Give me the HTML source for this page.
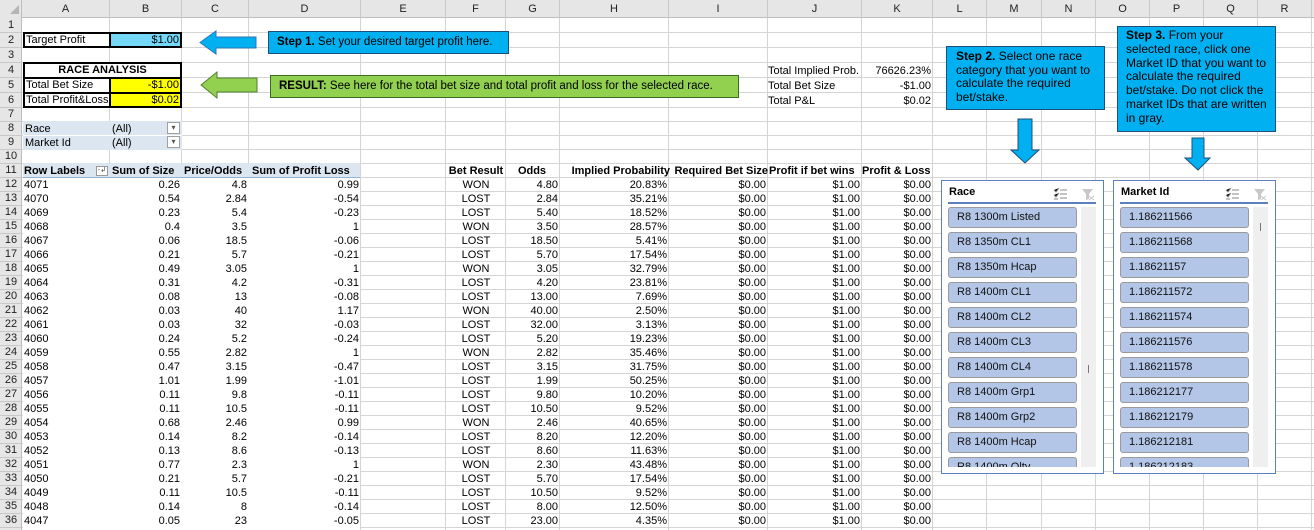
<!DOCTYPE html>
<html><head><meta charset="utf-8"><style>
*{margin:0;padding:0;box-sizing:border-box}
body{width:1314px;height:530px;overflow:hidden;background:#fff;font-family:"Liberation Sans",Arial,sans-serif;font-size:11px;color:#000;position:relative}
.abs{position:absolute}
.vl{position:absolute;top:18px;width:1px;height:512px;background:#d4d4d4}
.ch{position:absolute;top:0;height:18px;line-height:18px;text-align:center;color:#222;font-size:11px;border-right:1px solid #c8c8c8}
.rn{position:absolute;left:0;width:22px;text-align:center;color:#222;font-size:11px}
.r{position:absolute;left:0;width:940px;height:14px;line-height:14px}
.r b{position:absolute;font-weight:normal;white-space:nowrap}
.a{left:24px}
.b{left:110px;width:70px;text-align:right}
.c{left:182px;width:65px;text-align:right}
.d{left:249px;width:110px;text-align:right}
.f{left:446px;width:60px;text-align:center}
.g{left:506px;width:52px;text-align:right}
.h{left:560px;width:107px;text-align:right}
.i{left:669px;width:97px;text-align:right}
.j{left:768px;width:92px;text-align:right}
.k{left:862px;width:69px;text-align:right}
.sl{position:absolute;background:#fff;border:1px solid #5b7fc0}
.sl .t{position:absolute;left:7px;top:5px;font-weight:bold;font-size:11px}
.sl .u{position:absolute;left:6px;top:21px;width:148px;height:2px;background:#5b7fc0}
.btn{position:absolute;left:6px;width:129px;height:21px;background:#b4c6e7;border:1px solid #9a9a9a;border-radius:3px;line-height:19px;padding-left:8px;font-size:11px;color:#111}
.sb{position:absolute;left:139px;top:26px;width:15px;height:260px;background:#efefef}
.clip{position:absolute;left:0;top:26px;width:160px;height:260px;overflow:hidden}
.call{position:absolute;background:#00b0f0;border:1px solid #1f4e79;line-height:14px;font-size:11.5px;white-space:nowrap}
</style></head><body>
<div class="abs" style="left:0;top:0;width:1314px;height:18px;background:#e6e6e6;border-bottom:1px solid #bdbdbd"></div>
<div class="abs" style="left:0;top:0;width:22px;height:530px;background:#e6e6e6;border-right:1px solid #bdbdbd"></div>
<svg class="abs" style="left:10px;top:5px" width="10" height="10"><polygon points="9,0 9,9 0,9" fill="#b5b5b5"/></svg>
<div class="ch" style="left:22px;width:88px">A</div>
<div class="ch" style="left:110px;width:72px">B</div>
<div class="ch" style="left:182px;width:67px">C</div>
<div class="ch" style="left:249px;width:112px">D</div>
<div class="ch" style="left:361px;width:85px">E</div>
<div class="ch" style="left:446px;width:60px">F</div>
<div class="ch" style="left:506px;width:54px">G</div>
<div class="ch" style="left:560px;width:109px">H</div>
<div class="ch" style="left:669px;width:99px">I</div>
<div class="ch" style="left:768px;width:94px">J</div>
<div class="ch" style="left:862px;width:71px">K</div>
<div class="ch" style="left:933px;width:54px">L</div>
<div class="ch" style="left:987px;width:55px">M</div>
<div class="ch" style="left:1042px;width:54px">N</div>
<div class="ch" style="left:1096px;width:54px">O</div>
<div class="ch" style="left:1150px;width:54px">P</div>
<div class="ch" style="left:1204px;width:54px">Q</div>
<div class="ch" style="left:1258px;width:54px">R</div>

<div class="abs" style="left:22px;top:18px;width:1292px;height:90px;background:repeating-linear-gradient(to bottom,transparent 0 14px,#d4d4d4 14px 15px)"></div>
<div class="abs" style="left:22px;top:108px;width:1292px;height:420px;background:repeating-linear-gradient(to bottom,transparent 0 13px,#d4d4d4 13px 14px)"></div>
<div class="abs" style="left:0;top:18px;width:22px;height:90px;background:repeating-linear-gradient(to bottom,transparent 0 14px,#c8c8c8 14px 15px)"></div>
<div class="abs" style="left:0;top:108px;width:22px;height:420px;background:repeating-linear-gradient(to bottom,transparent 0 13px,#c8c8c8 13px 14px)"></div>
<div class="vl" style="left:109px"></div><div class="vl" style="left:181px"></div><div class="vl" style="left:248px"></div><div class="vl" style="left:360px"></div><div class="vl" style="left:445px"></div><div class="vl" style="left:505px"></div><div class="vl" style="left:559px"></div><div class="vl" style="left:668px"></div><div class="vl" style="left:767px"></div><div class="vl" style="left:861px"></div><div class="vl" style="left:932px"></div><div class="vl" style="left:986px"></div><div class="vl" style="left:1041px"></div><div class="vl" style="left:1095px"></div><div class="vl" style="left:1149px"></div><div class="vl" style="left:1203px"></div><div class="vl" style="left:1257px"></div><div class="vl" style="left:1311px"></div>

<div class="rn" style="top:19px">1</div><div class="rn" style="top:34px">2</div><div class="rn" style="top:49px">3</div><div class="rn" style="top:64px">4</div><div class="rn" style="top:79px">5</div><div class="rn" style="top:94px">6</div>
<div class="rn" style="top:108px">7</div><div class="rn" style="top:122px">8</div><div class="rn" style="top:136px">9</div><div class="rn" style="top:150px">10</div><div class="rn" style="top:164px">11</div><div class="rn" style="top:178px">12</div><div class="rn" style="top:192px">13</div><div class="rn" style="top:206px">14</div><div class="rn" style="top:220px">15</div><div class="rn" style="top:234px">16</div><div class="rn" style="top:248px">17</div><div class="rn" style="top:262px">18</div><div class="rn" style="top:276px">19</div><div class="rn" style="top:290px">20</div><div class="rn" style="top:304px">21</div><div class="rn" style="top:318px">22</div><div class="rn" style="top:332px">23</div><div class="rn" style="top:346px">24</div><div class="rn" style="top:360px">25</div><div class="rn" style="top:374px">26</div><div class="rn" style="top:388px">27</div><div class="rn" style="top:402px">28</div><div class="rn" style="top:416px">29</div><div class="rn" style="top:430px">30</div><div class="rn" style="top:444px">31</div><div class="rn" style="top:458px">32</div><div class="rn" style="top:472px">33</div><div class="rn" style="top:486px">34</div><div class="rn" style="top:500px">35</div><div class="rn" style="top:514px">36</div>

<div class="abs" style="left:23px;top:32px;width:159px;height:16px;border:2px solid #000;background:#fff"></div>
<div class="abs" style="left:109px;top:32px;width:73px;height:16px;border:2px solid #000;background:#75d8f9"></div>
<div class="abs" style="left:26px;top:33px;line-height:15px">Target Profit</div>
<div class="abs" style="left:112px;top:33px;width:67px;text-align:right;line-height:15px">$1.00</div>
<div class="abs" style="left:23px;top:62px;width:159px;height:17px;border:2px solid #000;background:#fff;text-align:center;font-weight:bold;line-height:13px">RACE ANALYSIS</div>
<div class="abs" style="left:23px;top:77px;width:88px;height:31px;border:2px solid #000;background:#fff"></div>
<div class="abs" style="left:23px;top:92px;width:88px;height:2px;background:#000"></div>
<div class="abs" style="left:109px;top:77px;width:73px;height:31px;border:2px solid #000;background:#ffff00"></div>
<div class="abs" style="left:109px;top:92px;width:73px;height:2px;background:#000"></div>
<div class="abs" style="left:26px;top:79px;line-height:13px">Total Bet Size</div>
<div class="abs" style="left:26px;top:94px;line-height:13px">Total Profit&amp;Loss</div>
<div class="abs" style="left:112px;top:79px;width:67px;text-align:right;line-height:13px">-$1.00</div>
<div class="abs" style="left:112px;top:94px;width:67px;text-align:right;line-height:13px">$0.02</div>

<div class="abs" style="left:23px;top:121px;width:159px;height:29px;background:#dce6f1"></div>
<div class="abs" style="left:23px;top:135px;width:159px;height:1px;background:#fff"></div>
<div class="abs" style="left:25px;top:122px;line-height:14px">Race</div>
<div class="abs" style="left:112px;top:122px;line-height:14px">(All)</div>
<div class="abs" style="left:25px;top:136px;line-height:14px">Market Id</div>
<div class="abs" style="left:112px;top:136px;line-height:14px">(All)</div>
<div class="abs" style="left:167px;top:122px;width:13px;height:12px;border:1px solid #a0a0a0;background:#fff;font-size:8px;text-align:center;line-height:9px;color:#555">&#9662;</div>
<div class="abs" style="left:167px;top:136px;width:13px;height:12px;border:1px solid #a0a0a0;background:#fff;font-size:8px;text-align:center;line-height:9px;color:#555">&#9662;</div>

<div class="abs" style="left:23px;top:163px;width:337px;height:15px;background:#dce6f1;border-bottom:1px solid #95b3d7"></div>
<div class="abs" style="left:23px;top:178px;width:337px;height:352px;background:#fff"></div>
<div class="abs" style="left:96px;top:166px;width:12px;height:10px;border:1px solid #9a9a9a;background:#fff;font-size:7px;line-height:8px;text-align:center;color:#444">-&#8626;</div>
<div class="r" style="top:164px;font-weight:bold"><b class="a" style="font-weight:bold">Row Labels</b><b class="b" style="font-weight:bold;left:112px;width:auto;text-align:left">Sum of Size</b><b class="c" style="font-weight:bold;left:184px;width:auto;text-align:left">Price/Odds</b><b class="d" style="font-weight:bold;left:252px;width:auto;text-align:left">Sum of Profit Loss</b>
<b class="f" style="font-weight:bold">Bet Result</b><b class="g" style="font-weight:bold;text-align:center">Odds</b><b class="h" style="font-weight:bold;left:563px">Implied Probability</b><b class="i" style="font-weight:bold;left:669px;width:99px">Required Bet Size</b><b class="j" style="font-weight:bold;left:769px;width:auto;text-align:left">Profit if bet wins</b><b class="k" style="font-weight:bold;left:862px;width:auto;text-align:left">Profit &amp; Loss</b></div>

<div class="abs" style="left:768px;top:64px;line-height:14px">Total Implied Prob.</div><div class="abs" style="left:862px;top:64px;width:69px;text-align:right;line-height:14px">76626.23%</div>
<div class="abs" style="left:768px;top:79px;line-height:14px">Total Bet Size</div><div class="abs" style="left:862px;top:79px;width:69px;text-align:right;line-height:14px">-$1.00</div>
<div class="abs" style="left:768px;top:94px;line-height:14px">Total P&amp;L</div><div class="abs" style="left:862px;top:94px;width:69px;text-align:right;line-height:14px">$0.02</div>

<div class="r" style="top:178px"><b class="a">4071</b><b class="b">0.26</b><b class="c">4.8</b><b class="d">0.99</b><b class="f">WON</b><b class="g">4.80</b><b class="h">20.83%</b><b class="i">$0.00</b><b class="j">$1.00</b><b class="k">$0.00</b></div>
<div class="r" style="top:192px"><b class="a">4070</b><b class="b">0.54</b><b class="c">2.84</b><b class="d">-0.54</b><b class="f">LOST</b><b class="g">2.84</b><b class="h">35.21%</b><b class="i">$0.00</b><b class="j">$1.00</b><b class="k">$0.00</b></div>
<div class="r" style="top:206px"><b class="a">4069</b><b class="b">0.23</b><b class="c">5.4</b><b class="d">-0.23</b><b class="f">LOST</b><b class="g">5.40</b><b class="h">18.52%</b><b class="i">$0.00</b><b class="j">$1.00</b><b class="k">$0.00</b></div>
<div class="r" style="top:220px"><b class="a">4068</b><b class="b">0.4</b><b class="c">3.5</b><b class="d">1</b><b class="f">WON</b><b class="g">3.50</b><b class="h">28.57%</b><b class="i">$0.00</b><b class="j">$1.00</b><b class="k">$0.00</b></div>
<div class="r" style="top:234px"><b class="a">4067</b><b class="b">0.06</b><b class="c">18.5</b><b class="d">-0.06</b><b class="f">LOST</b><b class="g">18.50</b><b class="h">5.41%</b><b class="i">$0.00</b><b class="j">$1.00</b><b class="k">$0.00</b></div>
<div class="r" style="top:248px"><b class="a">4066</b><b class="b">0.21</b><b class="c">5.7</b><b class="d">-0.21</b><b class="f">LOST</b><b class="g">5.70</b><b class="h">17.54%</b><b class="i">$0.00</b><b class="j">$1.00</b><b class="k">$0.00</b></div>
<div class="r" style="top:262px"><b class="a">4065</b><b class="b">0.49</b><b class="c">3.05</b><b class="d">1</b><b class="f">WON</b><b class="g">3.05</b><b class="h">32.79%</b><b class="i">$0.00</b><b class="j">$1.00</b><b class="k">$0.00</b></div>
<div class="r" style="top:276px"><b class="a">4064</b><b class="b">0.31</b><b class="c">4.2</b><b class="d">-0.31</b><b class="f">LOST</b><b class="g">4.20</b><b class="h">23.81%</b><b class="i">$0.00</b><b class="j">$1.00</b><b class="k">$0.00</b></div>
<div class="r" style="top:290px"><b class="a">4063</b><b class="b">0.08</b><b class="c">13</b><b class="d">-0.08</b><b class="f">LOST</b><b class="g">13.00</b><b class="h">7.69%</b><b class="i">$0.00</b><b class="j">$1.00</b><b class="k">$0.00</b></div>
<div class="r" style="top:304px"><b class="a">4062</b><b class="b">0.03</b><b class="c">40</b><b class="d">1.17</b><b class="f">WON</b><b class="g">40.00</b><b class="h">2.50%</b><b class="i">$0.00</b><b class="j">$1.00</b><b class="k">$0.00</b></div>
<div class="r" style="top:318px"><b class="a">4061</b><b class="b">0.03</b><b class="c">32</b><b class="d">-0.03</b><b class="f">LOST</b><b class="g">32.00</b><b class="h">3.13%</b><b class="i">$0.00</b><b class="j">$1.00</b><b class="k">$0.00</b></div>
<div class="r" style="top:332px"><b class="a">4060</b><b class="b">0.24</b><b class="c">5.2</b><b class="d">-0.24</b><b class="f">LOST</b><b class="g">5.20</b><b class="h">19.23%</b><b class="i">$0.00</b><b class="j">$1.00</b><b class="k">$0.00</b></div>
<div class="r" style="top:346px"><b class="a">4059</b><b class="b">0.55</b><b class="c">2.82</b><b class="d">1</b><b class="f">WON</b><b class="g">2.82</b><b class="h">35.46%</b><b class="i">$0.00</b><b class="j">$1.00</b><b class="k">$0.00</b></div>
<div class="r" style="top:360px"><b class="a">4058</b><b class="b">0.47</b><b class="c">3.15</b><b class="d">-0.47</b><b class="f">LOST</b><b class="g">3.15</b><b class="h">31.75%</b><b class="i">$0.00</b><b class="j">$1.00</b><b class="k">$0.00</b></div>
<div class="r" style="top:374px"><b class="a">4057</b><b class="b">1.01</b><b class="c">1.99</b><b class="d">-1.01</b><b class="f">LOST</b><b class="g">1.99</b><b class="h">50.25%</b><b class="i">$0.00</b><b class="j">$1.00</b><b class="k">$0.00</b></div>
<div class="r" style="top:388px"><b class="a">4056</b><b class="b">0.11</b><b class="c">9.8</b><b class="d">-0.11</b><b class="f">LOST</b><b class="g">9.80</b><b class="h">10.20%</b><b class="i">$0.00</b><b class="j">$1.00</b><b class="k">$0.00</b></div>
<div class="r" style="top:402px"><b class="a">4055</b><b class="b">0.11</b><b class="c">10.5</b><b class="d">-0.11</b><b class="f">LOST</b><b class="g">10.50</b><b class="h">9.52%</b><b class="i">$0.00</b><b class="j">$1.00</b><b class="k">$0.00</b></div>
<div class="r" style="top:416px"><b class="a">4054</b><b class="b">0.68</b><b class="c">2.46</b><b class="d">0.99</b><b class="f">WON</b><b class="g">2.46</b><b class="h">40.65%</b><b class="i">$0.00</b><b class="j">$1.00</b><b class="k">$0.00</b></div>
<div class="r" style="top:430px"><b class="a">4053</b><b class="b">0.14</b><b class="c">8.2</b><b class="d">-0.14</b><b class="f">LOST</b><b class="g">8.20</b><b class="h">12.20%</b><b class="i">$0.00</b><b class="j">$1.00</b><b class="k">$0.00</b></div>
<div class="r" style="top:444px"><b class="a">4052</b><b class="b">0.13</b><b class="c">8.6</b><b class="d">-0.13</b><b class="f">LOST</b><b class="g">8.60</b><b class="h">11.63%</b><b class="i">$0.00</b><b class="j">$1.00</b><b class="k">$0.00</b></div>
<div class="r" style="top:458px"><b class="a">4051</b><b class="b">0.77</b><b class="c">2.3</b><b class="d">1</b><b class="f">WON</b><b class="g">2.30</b><b class="h">43.48%</b><b class="i">$0.00</b><b class="j">$1.00</b><b class="k">$0.00</b></div>
<div class="r" style="top:472px"><b class="a">4050</b><b class="b">0.21</b><b class="c">5.7</b><b class="d">-0.21</b><b class="f">LOST</b><b class="g">5.70</b><b class="h">17.54%</b><b class="i">$0.00</b><b class="j">$1.00</b><b class="k">$0.00</b></div>
<div class="r" style="top:486px"><b class="a">4049</b><b class="b">0.11</b><b class="c">10.5</b><b class="d">-0.11</b><b class="f">LOST</b><b class="g">10.50</b><b class="h">9.52%</b><b class="i">$0.00</b><b class="j">$1.00</b><b class="k">$0.00</b></div>
<div class="r" style="top:500px"><b class="a">4048</b><b class="b">0.14</b><b class="c">8</b><b class="d">-0.14</b><b class="f">LOST</b><b class="g">8.00</b><b class="h">12.50%</b><b class="i">$0.00</b><b class="j">$1.00</b><b class="k">$0.00</b></div>
<div class="r" style="top:514px"><b class="a">4047</b><b class="b">0.05</b><b class="c">23</b><b class="d">-0.05</b><b class="f">LOST</b><b class="g">23.00</b><b class="h">4.35%</b><b class="i">$0.00</b><b class="j">$1.00</b><b class="k">$0.00</b></div>

<svg class="abs" style="left:0;top:0" width="1314" height="200">
<polygon points="200,42.5 216,31 216,37 256,37 256,48 216,48 216,54" fill="#00b0f0" stroke="#2e75b6" stroke-width="1"/>
<polygon points="201,85 217,72 217,78 257,78 257,92 217,92 217,98" fill="#92d050" stroke="#507e32" stroke-width="1"/>
<polygon points="1018,119 1032,119 1032,150 1039,150 1025,163 1011,150 1018,150" fill="#00b0f0" stroke="#1f4e79" stroke-width="1"/>
<polygon points="1192,138 1204,138 1204,158 1210,158 1198,170 1185,158 1192,158" fill="#00b0f0" stroke="#1f4e79" stroke-width="1"/>
</svg>

<div class="call" style="left:268px;top:31px;width:241px;height:23px;padding:3px 0 0 8px"><b>Step 1.</b> Set your desired target profit here.</div>
<div class="abs" style="left:270px;top:75px;width:469px;height:23px;background:#92d050;border:1px solid #3b6e22;padding:3px 0 0 8px;line-height:14px;font-size:11.5px;white-space:nowrap"><b>RESULT:</b> See here for the total bet size and total profit and loss for the selected race.</div>
<div class="call" style="left:946px;top:46px;width:159px;height:64px;padding:3px 0 0 9px;font-size:12px;line-height:13.5px"><b>Step 2.</b> Select one race<br>category that you want to<br>calculate the required<br>bet/stake.</div>
<div class="call" style="left:1117px;top:26px;width:159px;height:106px;padding:2px 0 0 8px;font-size:12px;line-height:13.8px"><b>Step 3.</b> From your<br>selected race, click one<br>Market ID that you want to<br>calculate the required<br>bet/stake. Do not click the<br>market IDs that are written<br>in gray.</div>

<div class="sl" style="left:941px;top:180px;width:163px;height:294px">
<div class="t">Race</div>
<svg class="abs" style="left:111px;top:6px" width="44" height="14"><g stroke="#888" stroke-width="1"><path d="M1 3l2 2 3-4M1 8l2 2 3-4M1 12h4"/><path d="M7 3h7M7 7h7M7 11h7"/></g><path d="M29 2h11l-4 5v5l-3 1v-6z" fill="#c8c8c8"/><path d="M36 9l5 4M41 9l-5 4" stroke="#c8c8c8"/></svg>
<div class="u"></div>
<div class="clip">
<div class="btn" style="top:0">R8 1300m Listed</div>
<div class="btn" style="top:25px">R8 1350m CL1</div>
<div class="btn" style="top:50px">R8 1350m Hcap</div>
<div class="btn" style="top:75px">R8 1400m CL1</div>
<div class="btn" style="top:100px">R8 1400m CL2</div>
<div class="btn" style="top:125px">R8 1400m CL3</div>
<div class="btn" style="top:150px">R8 1400m CL4</div>
<div class="btn" style="top:175px">R8 1400m Grp1</div>
<div class="btn" style="top:200px">R8 1400m Grp2</div>
<div class="btn" style="top:225px">R8 1400m Hcap</div>
<div class="btn" style="top:250px">R8 1400m Qlty</div>
</div>
<div class="sb"><div class="abs" style="left:7px;top:158px;width:1px;height:8px;background:#777"></div></div>
</div>

<div class="sl" style="left:1113px;top:180px;width:163px;height:294px">
<div class="t">Market Id</div>
<svg class="abs" style="left:111px;top:6px" width="44" height="14"><g stroke="#888" stroke-width="1"><path d="M1 3l2 2 3-4M1 8l2 2 3-4M1 12h4"/><path d="M7 3h7M7 7h7M7 11h7"/></g><path d="M29 2h11l-4 5v5l-3 1v-6z" fill="#c8c8c8"/><path d="M36 9l5 4M41 9l-5 4" stroke="#c8c8c8"/></svg>
<div class="u"></div>
<div class="clip">
<div class="btn" style="top:0">1.186211566</div>
<div class="btn" style="top:25px">1.186211568</div>
<div class="btn" style="top:50px">1.18621157</div>
<div class="btn" style="top:75px">1.186211572</div>
<div class="btn" style="top:100px">1.186211574</div>
<div class="btn" style="top:125px">1.186211576</div>
<div class="btn" style="top:150px">1.186211578</div>
<div class="btn" style="top:175px">1.186212177</div>
<div class="btn" style="top:200px">1.186212179</div>
<div class="btn" style="top:225px">1.186212181</div>
<div class="btn" style="top:250px">1.186212183</div>
</div>
<div class="sb"><div class="abs" style="left:7px;top:16px;width:1px;height:8px;background:#777"></div></div>
</div>
</body></html>
